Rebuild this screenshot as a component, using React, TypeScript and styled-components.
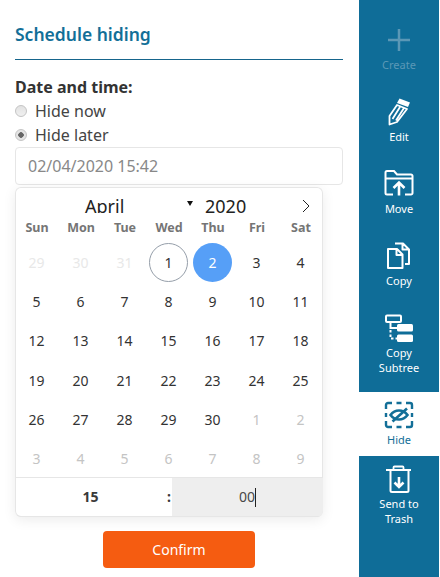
import React from 'react'
import styled, { createGlobalStyle } from 'styled-components'

const Global = createGlobalStyle`
  html, body {
    margin: 0;
    padding: 0;
    background: #fff;
    font-family: "Noto Sans", "Open Sans", sans-serif;
    color: #333;
  }
`

const Page = styled.div`
  display: flex;
  width: 440px;
  height: 577px;
  overflow: hidden;
`

const Main = styled.div`
  width: 359px;
  flex: none;
  box-sizing: border-box;
  padding: 0 16px 0 15px;
`

const Title = styled.h1`
  margin: 0;
  height: 60px;
  box-sizing: border-box;
  padding-top: 22px;
  border-bottom: 1px solid #16658c;
  font-size: 17.5px;
  line-height: 24px;
  font-weight: 600;
  color: #136f98;
`

const Label = styled.div`
  margin-top: 15px;
  font-size: 16px;
  line-height: 24px;
  font-weight: 700;
  color: #333;
`

const RadioRow = styled.div`
  display: flex;
  align-items: center;
  gap: 8px;
  height: 24px;
  font-size: 16px;
  color: #444;
`

const Radio = styled.span<{ $checked?: boolean }>`
  width: 12px;
  height: 12px;
  flex: none;
  border-radius: 50%;
  border: 1px solid #c4c4c4;
  box-sizing: border-box;
  background: ${({ $checked }) =>
    $checked ? 'radial-gradient(circle, #666 0 2.5px, #e4e4e4 3px)' : 'linear-gradient(#e2e2e2, #f0f0f0)'};
  margin-bottom: 1px;
`

const DateInput = styled.div`
  height: 38px;
  box-sizing: border-box;
  border: 1px solid #e6e6e6;
  border-radius: 4px;
  padding: 0 12px;
  font-size: 16px;
  line-height: 36px;
  color: #888;
`

const Calendar = styled.div`
  width: 308px;
  margin-top: 2px;
  border-radius: 6px;
  background: #fff;
  box-shadow: 0 0 0 1px #e6e6e6 inset, 0 3px 13px rgba(0, 0, 0, 0.08);
  overflow: hidden;
`

const MonthBar = styled.div`
  position: relative;
  height: 20px;
  overflow: hidden;
  display: flex;
  padding-left: 70px;
  font-size: 18px;
  line-height: 26px;
  padding-top: 6px;
  box-sizing: content-box;
  color: #222;
`

const Month = styled.span`
  width: 120px;
  flex: none;
  position: relative;
`

const Caret = styled.span`
  position: absolute;
  left: 102px;
  top: 8px;
  width: 0;
  height: 0;
  border-left: 3px solid transparent;
  border-right: 3px solid transparent;
  border-top: 5px solid #111;
`

const Year = styled.span`
  flex: none;
`

const NextMonth = styled.svg`
  position: absolute;
  left: 286px;
  top: 12px;
`

const Weekdays = styled.div`
  display: grid;
  grid-template-columns: repeat(7, 44px);
  height: 22px;
  line-height: 22px;
  text-align: center;
  font-size: 12.5px;
  font-weight: 700;
  color: #757575;
  margin-top: 4px;
`

const Days = styled.div`
  display: grid;
  grid-template-columns: repeat(7, 44px);
  grid-auto-rows: 39.2px;
  margin-top: 4px;
`

const Day = styled.div<{ $kind?: 'faint' | 'muted' | 'today' | 'selected' }>`
  width: 39px;
  height: 39px;
  margin-left: 2px;
  align-self: center;
  box-sizing: border-box;
  border-radius: 50%;
  display: flex;
  align-items: center;
  justify-content: center;
  font-size: 14px;
  color: ${({ $kind }) =>
    $kind === 'faint' ? '#e8e8e8' : $kind === 'muted' ? '#c4c4c4' : $kind === 'selected' ? '#fff' : '#333'};
  background: ${({ $kind }) => ($kind === 'selected' ? '#569ff7' : 'transparent')};
  border: 1px solid ${({ $kind }) => ($kind === 'today' ? '#959ea9' : 'transparent')};
`

const TimeRow = styled.div`
  display: flex;
  height: 40px;
  box-sizing: border-box;
  border-top: 1px solid #e6e6e6;
  border-bottom: 1px solid #e6e6e6;
  margin-top: -1px;
  font-size: 14px;
  line-height: 38px;
  text-align: center;
`

const Hours = styled.div`
  width: 151px;
  font-weight: 700;
  color: #393939;
`

const Colon = styled.div`
  width: 6px;
  font-weight: 700;
  color: #393939;
`

const Minutes = styled.div`
  flex: 1;
  background: #eeeeee;
  color: #484848;
`

const Cursor = styled.span`
  display: inline-block;
  width: 1px;
  height: 19px;
  background: #222;
  vertical-align: -5px;
`

const Actions = styled.div`
  display: flex;
  margin-top: 14px;
  padding-left: 88px;
`

const Confirm = styled.button`
  width: 152px;
  height: 37px;
  border: 0;
  border-radius: 4px;
  background: #f55c11;
  color: #fff;
  font-family: inherit;
  font-size: 14px;
  padding: 0;
`

const Sidebar = styled.nav`
  width: 80px;
  height: 577px;
  flex: none;
  box-sizing: border-box;
  padding-top: 17px;
  background: #0f6d98;
`

const Item = styled.div<{ $active?: boolean; $disabled?: boolean }>`
  display: flex;
  flex-direction: column;
  align-items: center;
  box-sizing: border-box;
  padding: 9px 0 9px;
  margin-bottom: ${({ $active }) => ($active ? 0 : 8)}px;
  background: ${({ $active }) => ($active ? '#fff' : 'transparent')};
  color: ${({ $active, $disabled }) => ($active ? '#136f98' : $disabled ? '#5b98b6' : '#fff')};
  &:last-child {
    margin-bottom: 0;
  }
`

const Icon = styled.svg`
  display: block;
  width: 32px;
  height: 28px;
  fill: none;
  stroke: currentColor;
  stroke-width: 2;
`

const ItemLabel = styled.span`
  margin-top: 3px;
  width: 70px;
  text-align: center;
  font-size: 11px;
  line-height: 15px;
`

const weekdays = ['Sun', 'Mon', 'Tue', 'Wed', 'Thu', 'Fri', 'Sat']

type DayCell = { n: number; kind?: 'faint' | 'muted' | 'today' | 'selected' }

const cells: DayCell[] = [
  { n: 29, kind: 'faint' },
  { n: 30, kind: 'faint' },
  { n: 31, kind: 'faint' },
  { n: 1, kind: 'today' },
  { n: 2, kind: 'selected' },
  ...Array.from({ length: 28 }, (_, i) => ({ n: i + 3 })),
  ...[1, 2, 3, 4, 5, 6, 7, 8, 9].map((n) => ({ n, kind: 'muted' as const })),
]

export default function App() {
  return (
    <Page>
      <Global />
      <Main>
        <Title>Schedule hiding</Title>
        <Label>Date and time:</Label>
        <RadioRow>
          <Radio />
          Hide now
        </RadioRow>
        <RadioRow>
          <Radio $checked />
          Hide later
        </RadioRow>
        <DateInput>02/04/2020 15:42</DateInput>
        <Calendar>
          <MonthBar>
            <Month>
              April
              <Caret />
            </Month>
            <Year>2020</Year>
            <NextMonth width="10" height="14" viewBox="0 0 10 14" fill="none" stroke="#222" strokeWidth="1">
              <path d="M2 1l6 6-6 6" />
            </NextMonth>
          </MonthBar>
          <Weekdays>
            {weekdays.map((d) => (
              <span key={d}>{d}</span>
            ))}
          </Weekdays>
          <Days>
            {cells.map((c, i) => (
              <Day key={i} $kind={c.kind}>
                {c.n}
              </Day>
            ))}
          </Days>
          <TimeRow>
            <Hours>15</Hours>
            <Colon>:</Colon>
            <Minutes>
              00
              <Cursor />
            </Minutes>
          </TimeRow>
        </Calendar>
        <Actions>
          <Confirm>Confirm</Confirm>
        </Actions>
      </Main>
      <Sidebar>
        <Item $disabled>
          <Icon viewBox="0 0 32 28">
            <path d="M16 3v22M5 14h22" strokeWidth="2.5" />
          </Icon>
          <ItemLabel>Create</ItemLabel>
        </Item>
        <Item>
          <Icon viewBox="0 0 32 28">
            <path d="M16.5.5L27 4.5 25 9 14 5z" fill="currentColor" stroke="none" />
            <path d="M14 7L6.5 18v8.5L14 24 24 11zM17 9L9.5 21M21 10l-8 12.5" strokeWidth="1.8" strokeLinejoin="round" />
          </Icon>
          <ItemLabel>Edit</ItemLabel>
        </Item>
        <Item>
          <Icon viewBox="0 0 32 28">
            <path d="M10 24.5H4a1.5 1.5 0 0 1-1.5-1.5V2.5A1.5 1.5 0 0 1 4 1h7l3 3.5h14A1.5 1.5 0 0 1 29.5 6v17a1.5 1.5 0 0 1-1.5 1.5h-6M2.5 8.5h27" />
            <path d="M16 25.5V12.5M10.5 18l5.5-5.500 5.500 5.500" strokeWidth="2.6" />
          </Icon>
          <ItemLabel>Move</ItemLabel>
        </Item>
        <Item>
          <Icon viewBox="0 0 32 28">
            <path d="M5 7h9l5.5 5.5V26H5zM13.5 7v6h6" strokeLinejoin="round" />
            <path d="M12 1.5h8l6 6V22h-4M19.5 1.5v6h6" strokeLinejoin="round" />
          </Icon>
          <ItemLabel>Copy</ItemLabel>
        </Item>
        <Item>
          <Icon viewBox="0 0 32 28">
            <rect x="3" y="1.5" width="15" height="6.5" rx="1" />
            <rect x="14" y="10" width="16" height="7.5" rx="1.5" fill="currentColor" stroke="none" />
            <rect x="14" y="20.5" width="16" height="7.5" rx="1.5" fill="currentColor" stroke="none" />
            <path d="M7.5 8v6h6.5" />
            <path d="M7.5 16v8.5H14" strokeDasharray="2.5 2" />
          </Icon>
          <ItemLabel>
            Copy
            <br />
            Subtree
          </ItemLabel>
        </Item>
        <Item $active>
          <Icon viewBox="0 0 32 28">
            <path
              d="M3 8V4a2 2 0 0 1 2-2h4M23 2h4a2 2 0 0 1 2 2v4M29 20v4a2 2 0 0 1-2 2h-4M9 26H5a2 2 0 0 1-2-2v-4M13.5 2h5M13.5 26h5M3 12v4M29 12v4"
              strokeWidth="2.4"
            />
            <path d="M7.5 14c4.5-6 12.500-6 17 0-4.500 6-12.500 6-17 0z" strokeWidth="2.6" />
            <path d="M24 7.5L9.500 20.500" strokeWidth="2.6" />
          </Icon>
          <ItemLabel>Hide</ItemLabel>
        </Item>
        <Item>
          <Icon viewBox="0 0 32 28">
            <path d="M3 5h25M10.500 5V2.500A1 1 0 0 1 11.500 1.500h8a1 1 0 0 1 1 1V5" strokeWidth="1.8" />
            <path d="M7.500 6v19.500a1.500 1.500 0 0 0 1.500 1.500h15a1.500 1.500 0 0 0 1.500-1.500V6" />
            <path d="M16 12v9.500M11.500 17.500l4.500 4.500 4.500-4.500" strokeWidth="2.6" />
          </Icon>
          <ItemLabel>
            Send to
            <br />
            Trash
          </ItemLabel>
        </Item>
      </Sidebar>
    </Page>
  )
}
